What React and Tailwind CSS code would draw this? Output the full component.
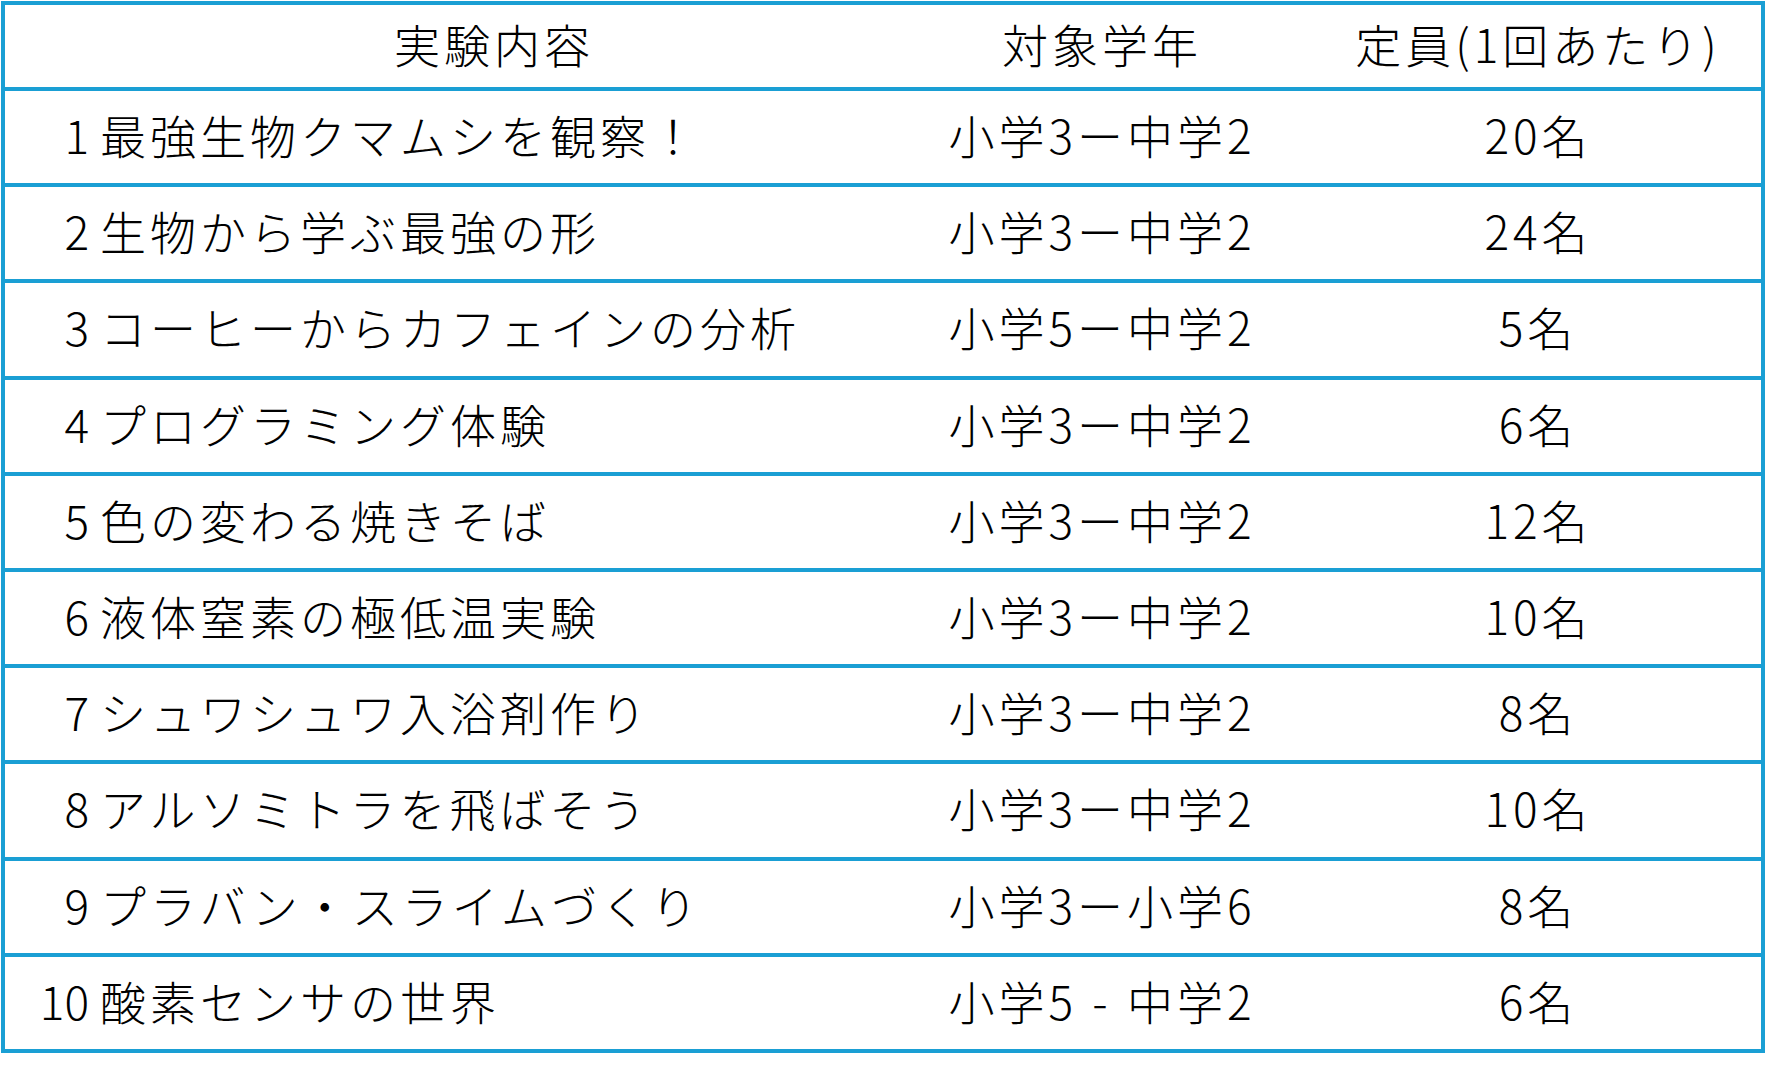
const rows = [
  { no: '1', title: '最強生物クマムシを観察！', grade: '小学3ー中学2', cap: '20名' },
  { no: '2', title: '生物から学ぶ最強の形', grade: '小学3ー中学2', cap: '24名' },
  { no: '3', title: 'コーヒーからカフェインの分析', grade: '小学5ー中学2', cap: '5名' },
  { no: '4', title: 'プログラミング体験', grade: '小学3ー中学2', cap: '6名' },
  { no: '5', title: '色の変わる焼きそば', grade: '小学3ー中学2', cap: '12名' },
  { no: '6', title: '液体窒素の極低温実験', grade: '小学3ー中学2', cap: '10名' },
  { no: '7', title: 'シュワシュワ入浴剤作り', grade: '小学3ー中学2', cap: '8名' },
  { no: '8', title: 'アルソミトラを飛ばそう', grade: '小学3ー中学2', cap: '10名' },
  { no: '9', title: 'プラバン・スライムづくり', grade: '小学3ー小学6', cap: '8名' },
  { no: '10', title: '酸素センサの世界', grade: '小学5-中学2', cap: '6名' },
];

// the last row uses a short hyphen set in a full-width box
function Grade({ text }) {
  if (!text.includes('-')) return text;
  const [a, b] = text.split('-');
  return (
    <>
      {a}
      <span className="inline-block w-[50px] text-center">-</span>
      {b}
    </>
  );
}

export default function App() {
  return (
    <div className="w-[1768px] h-[1065px] bg-white pl-px pt-px">
      <div
        className="w-[1764px] border-4 border-[#1a9fd4] text-black text-[46px] font-light tracking-[4px] leading-none"
        style={{ fontFamily: '"Noto Sans CJK JP", "Noto Sans", sans-serif' }}
      >
        <div className="grid grid-cols-[884px_426px_1fr] h-[86px] pb-[6px] items-center border-b-4 border-[#1a9fd4]">
          <div className="pl-[94px] text-center whitespace-nowrap">実験内容</div>
          <div className="flex justify-center whitespace-nowrap">対象学年</div>
          <div className="flex justify-center whitespace-nowrap">定員(1回あたり)</div>
        </div>
        {rows.map((r, i) => (
          <div
            key={r.no}
            className={
              'grid grid-cols-[884px_426px_1fr] pb-[6px] items-center' +
              (i < rows.length - 1 ? ' h-[96.2px] border-b-4 border-[#1a9fd4]' : ' h-[92.2px]')
            }
          >
            <div className="flex items-center whitespace-nowrap">
              <span className="w-[84px] text-right tracking-normal">{r.no}</span>
              <span className="ml-[11px]">{r.title}</span>
            </div>
            <div className="flex justify-center whitespace-nowrap">
              <Grade text={r.grade} />
            </div>
            <div className="flex justify-center whitespace-nowrap">{r.cap}</div>
          </div>
        ))}
      </div>
    </div>
  );
}
